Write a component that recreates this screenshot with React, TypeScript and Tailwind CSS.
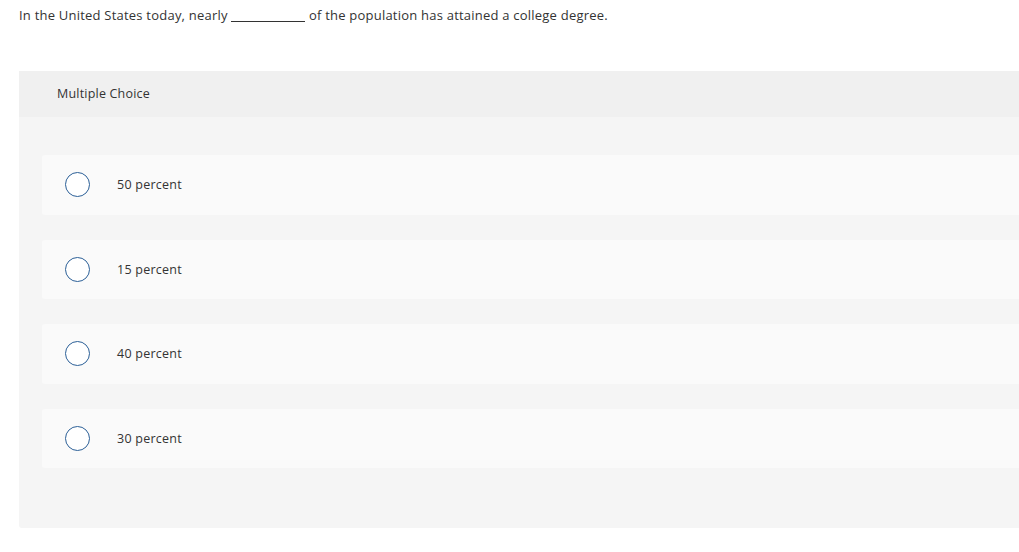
import React from "react";

const options = ["50 percent", "15 percent", "40 percent", "30 percent"];

export default function App() {
  return (
    <div
      className="w-[1019px] h-[552px] overflow-hidden bg-white text-[#333]"
      style={{ fontFamily: "'Open Sans', 'Liberation Sans', sans-serif" }}
    >
      {/* Question */}
      <p className="pl-[19px] pt-[5px] text-[13px] leading-[20px] tracking-[0.22px]">
        In the United States today, nearly{" "}
        <span className="inline-block w-[74px] border-b border-[#333] align-baseline translate-y-[2px]"></span>{" "}
        of the population has attained a college degree.
      </p>

      {/* Panel */}
      <div className="ml-[19px] mt-[46px] w-[1040px] rounded-bl-[3px] bg-[#f5f5f5]">
        <div className="h-[46px] bg-[#f0f0f0] pl-[38px] flex items-center text-[12.5px] tracking-[0.2px]">
          Multiple Choice
        </div>
        <div className="pl-[23px] pt-[38px] pb-[60px] flex flex-col gap-[25px]">
          {options.map((o) => (
            <div
              key={o}
              className="h-[59.5px] rounded-[3px] bg-[#fafafa] flex items-center pl-[23px]"
            >
              <span className="w-[25px] h-[25px] rounded-full border-[1.5px] border-[#2b5f97] bg-white shrink-0"></span>
              <span className="ml-[27px] pt-[2px] text-[12.5px] tracking-[0.25px]">{o}</span>
            </div>
          ))}
        </div>
      </div>
    </div>
  );
}
